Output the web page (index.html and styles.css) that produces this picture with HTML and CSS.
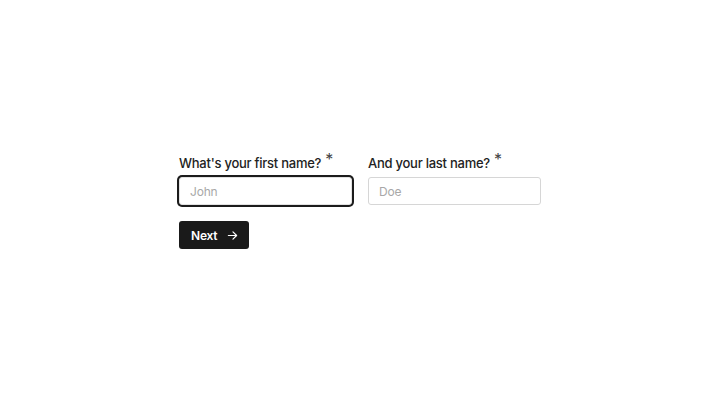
FILE: index.html
```html
<!DOCTYPE html>
<html lang="en">
<head>
<meta charset="utf-8">
<title>Form</title>
<link rel="stylesheet" href="styles.css">
</head>
<body>
<main class="page">
  <form class="form">
    <div class="fields">
      <div class="field">
        <label class="label" for="first">What's your first name?<span class="req">*</span></label>
        <input class="input input-focus" id="first" type="text" placeholder="John">
      </div>
      <div class="field">
        <label class="label" for="last">And your last name?<span class="req">*</span></label>
        <input class="input" id="last" type="text" placeholder="Doe">
      </div>
    </div>
    <div class="actions">
      <button class="btn" type="button"><span>Next</span><svg class="arrow" viewBox="0 0 12 12" fill="none" stroke="currentColor" stroke-width="1.3" stroke-linecap="round" stroke-linejoin="round"><path d="M1.5 6h9M6.5 2l4 4-4 4"/></svg></button>
    </div>
  </form>
</main>
</body>
</html>
```
FILE: styles.css
```css
html, body {
  margin: 0;
  padding: 0;
  background: #ffffff;
}
body {
  font-family: Inter, "Noto Sans", sans-serif;
  color: #1f1f1f;
}
.page {
  height: 405px;
  display: flex;
  align-items: center;
  justify-content: center;
}
.form {
  width: 362px;
  display: flex;
  flex-direction: column;
  gap: 16px;
  margin-top: -3px;
}
.fields {
  display: flex;
  gap: 16px;
}
.field {
  flex: 1;
  display: flex;
  flex-direction: column;
  gap: 5px;
}
.label {
  font-size: 13px;
  font-weight: 500;
  line-height: 18px;
  letter-spacing: -0.25px;
  color: #222;
}
.req {
  font-size: 16px;
  font-weight: 400;
  color: #444;
  margin-left: 4px;
  position: relative;
  top: -3px;
}
.input {
  box-sizing: border-box;
  width: 100%;
  height: 28px;
  border: 1px solid #d6d6d6;
  border-radius: 3px;
  padding: 0 10px;
  font-family: Inter, "Noto Sans", sans-serif;
  font-size: 12px;
  letter-spacing: -0.2px;
  color: #222;
  background: #fff;
  outline: none;
}
.input::placeholder {
  color: #a8a8a8;
}
.input-focus {
  box-shadow: 0 0 0 2px #1c1c1c;
  border-color: #e2e2e2;
}
.actions {
  display: flex;
}
.btn {
  height: 28px;
  width: 70px;
  box-sizing: border-box;
  background: #1a1a1a;
  color: #fff;
  border: none;
  border-radius: 3px;
  font-family: Inter, "Noto Sans", sans-serif;
  font-size: 12px;
  font-weight: 600;
  letter-spacing: -0.2px;
  display: flex;
  align-items: center;
  padding: 0 0 0 12px;
  gap: 10px;
  cursor: pointer;
}
.arrow {
  display: block;
  width: 11px;
  height: 11px;
  flex-shrink: 0;
}
```
